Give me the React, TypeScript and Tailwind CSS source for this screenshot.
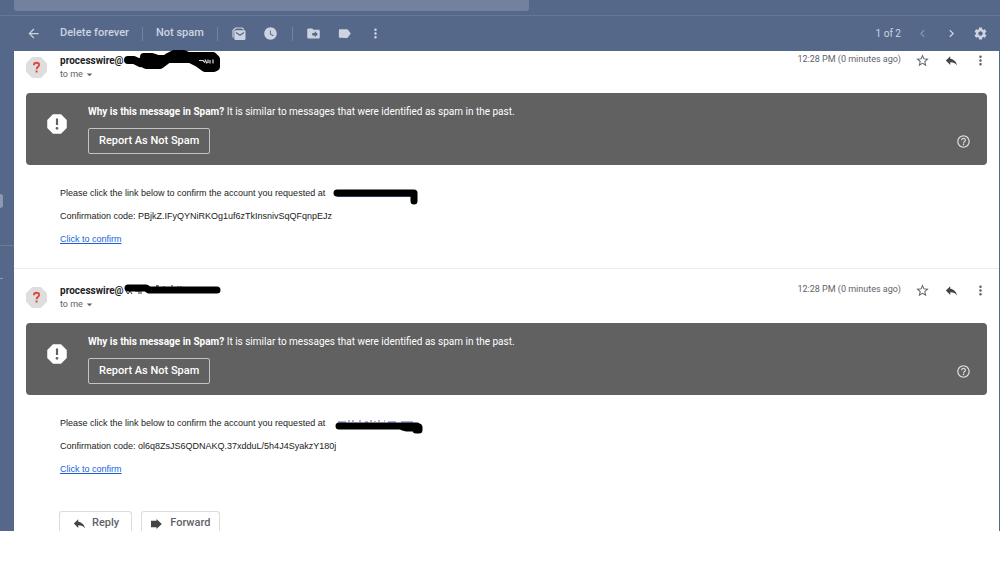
import type { ReactNode } from 'react';
import {
  MdArrowBack,
  MdArrowDropDown,
  MdChevronLeft,
  MdChevronRight,
  MdDriveFileMove,
  MdHelpOutline,
  MdLabel,
  MdMoreVert,
  MdReply,
  MdReport,
  MdSettings,
  MdStarBorder,
  MdWatchLater,
} from 'react-icons/md';

type Message = {
  code: string;
  senderMask: ReactNode;
  linkMask: ReactNode;
};

const messages: Message[] = [
  {
    code: 'PBjkZ.IFyQYNiRKOg1uf6zTkInsnivSqQFqnpEJz',
    senderMask: (
      <svg className="absolute -top-1 left-16" width="98" height="24" viewBox="0 0 98 24" aria-hidden="true">
        <path
          d="M4 10H10L16 13M20 7H28L34 9H40M16 12L22 15H36L44 9M44 7L50 4H60L64 6M44 9H64M64 6H89L92 9V17L90 18H81L74 13L66 9"
          fill="none"
          stroke="#000"
          strokeWidth="8"
          strokeLinecap="round"
          strokeLinejoin="round"
        />
        <path d="M20 7H90V17H82L74 12H40L34 15H22Z" fill="#000" />
        <path d="M75 10.500h4l2 2M81 9.500l2 4M84 9.500v3.500M86 10v3.500M89 9.500v4" fill="none" stroke="#ddd" strokeWidth="1.200" />
      </svg>
    ),
    linkMask: (
      <svg className="absolute -top-0.5 left-full ml-2" width="88" height="22" viewBox="0 0 88 22" aria-hidden="true">
        <path d="M4 11.500H81" stroke="#4a78cf" strokeWidth="1" />
        <path
          d="M4 8H81V16"
          fill="none"
          stroke="#000"
          strokeWidth="7"
          strokeLinecap="round"
          strokeLinejoin="round"
        />
      </svg>
    ),
  },
  {
    code: 'ol6q8ZsJS6QDNAKQ.37xdduL/5h4J4SyakzY180j',
    senderMask: (
      <svg className="absolute -top-1 left-16" width="98" height="24" viewBox="0 0 98 24" aria-hidden="true">
        <path d="M2 11l2 3 2-3 2 3M11 11h4v3M17 11v3M32 6h3M33 5v3M40 6v3M43 7v2M48 5v3M54 6v3M57 6v1" fill="none" stroke="#333" strokeWidth="1" />
        <path
          d="M4 8H22L25 10H93"
          fill="none"
          stroke="#000"
          strokeWidth="7"
          strokeLinecap="round"
          strokeLinejoin="round"
        />
      </svg>
    ),
    linkMask: (
      <svg className="absolute -top-0.5 left-full ml-2" width="94" height="22" viewBox="0 0 94 22" aria-hidden="true">
        <path d="M5 7h8M16 5v2M20 5v2M27 5v2M32 7h3M38 5v2M42 6v1M46 5v2M51 6h1M55 7h8M68 7h12" fill="none" stroke="#4a68b8" strokeWidth="1" />
        <path
          d="M6 11H84M70 12L74 13H82L86 12V15H83"
          fill="none"
          stroke="#000"
          strokeWidth="7"
          strokeLinecap="round"
          strokeLinejoin="round"
        />
      </svg>
    ),
  },
];

function IconButton({ label, className = '', children }: { label: string; className?: string; children: ReactNode }) {
  return (
    <button type="button" aria-label={label} className={`flex size-5 shrink-0 items-center justify-center ${className}`}>
      {children}
    </button>
  );
}

function Separator() {
  return <span className="h-[14px] w-px bg-[#7383a0]" />;
}

function MarkReadIcon() {
  return (
    <svg width="14" height="14" viewBox="0 0 14 14" aria-hidden="true">
      <path d="M1 10.500V3.500L3.500 1H10L12 2.500" fill="none" stroke="currentColor" strokeWidth="1.200" />
      <rect x="2.300" y="3.300" width="11.200" height="9.700" rx="1.200" fill="currentColor" />
      <path d="M4 5.500L8 8.300L12 5.500" fill="none" stroke="#566889" strokeWidth="1.200" />
    </svg>
  );
}

function ForwardIcon() {
  return (
    <svg width="11" height="10" viewBox="0 0 11 10" aria-hidden="true">
      <path d="M0 1.800H5.500V0L10.800 5L5.500 10V8.200H0Z" fill="currentColor" />
    </svg>
  );
}

function UnknownSenderAvatar() {
  return (
    <svg className="shrink-0" width="21" height="21" viewBox="0 0 21 21" aria-hidden="true">
      <path d="M6.200 0H14.800L21 6.200V14.800L14.800 21H6.200L0 14.800V6.200Z" fill="#dedede" />
      <path d="M7.900 8.300C7.900 6.600 9 5.800 10.500 5.800C12 5.800 13.100 6.600 13.100 8C13.100 9.800 10.600 9.900 10.600 12.300" fill="none" stroke="#dc4b40" strokeWidth="1.900" />
      <rect x="9.600" y="13.500" width="2" height="2" fill="#dc4b40" />
    </svg>
  );
}

function Toolbar() {
  return (
    <header className="text-[#cdd4e0]">
      <div className="h-[15px] pl-3.5">
        <div className="h-[11px] w-[52.200%] rounded-b-[3px] bg-[#72819d]" />
      </div>
      <div className="flex h-9 items-center border-t border-[#64769a] pr-[10px] pl-[23px] text-[11px] font-medium">
        <IconButton label="Back">
          <MdArrowBack size={15} />
        </IconButton>
        <div className="ml-[17px] flex items-center gap-[13px]">
          <button type="button">Delete forever</button>
          <Separator />
          <button type="button">Not spam</button>
          <Separator />
        </div>
        <div className="ml-[11px] flex items-center gap-3">
          <IconButton label="Mark as read">
            <MarkReadIcon />
          </IconButton>
          <IconButton label="Snooze">
            <MdWatchLater size={15} />
          </IconButton>
        </div>
        <div className="ml-[11px] flex items-center gap-[11px]">
          <Separator />
          <IconButton label="Move to">
            <MdDriveFileMove size={15} />
          </IconButton>
          <IconButton label="Labels">
            <MdLabel size={15} />
          </IconButton>
          <IconButton label="More">
            <MdMoreVert size={15} />
          </IconButton>
        </div>
        <div className="ml-auto flex items-center gap-[9px]">
          <span className="mr-0.5 text-[10px] font-normal">1 of 2</span>
          <IconButton label="Newer" className="opacity-40">
            <MdChevronLeft size={15} />
          </IconButton>
          <IconButton label="Older">
            <MdChevronRight size={15} />
          </IconButton>
          <IconButton label="Settings">
            <MdSettings size={15} />
          </IconButton>
        </div>
      </div>
    </header>
  );
}

function SpamBanner() {
  return (
    <section className="mx-3 flex h-[72px] rounded bg-[#616161] pr-[14px] pl-[18px] text-white">
      <MdReport size={26} className="mt-[18px] shrink-0" />
      <div className="ml-[18px] pt-3">
        <p className="text-[10px] leading-[14px]">
          <b className="font-bold">Why is this message in Spam?</b> It is similar to messages that were identified as spam in the past.
        </p>
        <button type="button" className="mt-[9px] h-[26px] rounded-[2px] border border-[#c4c4c4] px-[10px] pt-px text-[11px] font-medium">
          Report As Not Spam
        </button>
      </div>
      <IconButton label="Help" className="mt-[38px] ml-auto text-[#dcdcdc]">
        <MdHelpOutline size={15} />
      </IconButton>
    </section>
  );
}

function MessageView({ message }: { message: Message }) {
  return (
    <article>
      <div className="flex h-[42px] items-start pt-[3px] pr-[9px] pl-3">
        <div className="mt-[3px]">
          <UnknownSenderAvatar />
        </div>
        <div className="ml-[13px]">
          <div className="relative text-[10px] leading-[14px] font-bold text-[#222]">
            processwire@
            {message.senderMask}
          </div>
          <button type="button" className="flex items-center text-[9px] leading-[13px] text-[#5f6368]">
            to me
            <MdArrowDropDown size={13} />
          </button>
        </div>
        <div className="-mt-1 ml-auto flex items-center gap-[9px] text-[#5f6368]">
          <time className="mr-0.5 text-[9px]">12:28 PM (0 minutes ago)</time>
          <IconButton label="Star">
            <MdStarBorder size={15} />
          </IconButton>
          <IconButton label="Reply" className="text-[#444]">
            <MdReply size={15} />
          </IconButton>
          <IconButton label="More">
            <MdMoreVert size={15} />
          </IconButton>
        </div>
      </div>
      <SpamBanner />
      <div className="flex flex-col items-start gap-[10px] pt-[22px] pb-[22px] pl-[46px] font-['Liberation_Sans',Arial,sans-serif] text-[9px] leading-[13px] text-[#222]">
        <p className="relative">
          Please click the link below to confirm the account you requested at
          {message.linkMask}
        </p>
        <p>Confirmation code: {message.code}</p>
        <a href="#confirm" className="text-[#1a5fdc] underline">
          Click to confirm
        </a>
      </div>
    </article>
  );
}

function Sidebar() {
  return (
    <aside className="w-[15px] shrink-0 border-r border-[#c3cbe0] pt-[143px]" aria-label="Folders">
      <div className="h-3.5 w-[3px] rounded-r-full bg-[#8c99b1]" />
      <div className="mt-[37px] h-px bg-[#6b7b99]" />
      <div className="mt-8 h-px w-[3px] bg-[#8c99b1]" />
    </aside>
  );
}

export default function App() {
  return (
    <div className="min-h-screen bg-white font-['Roboto',sans-serif]">
      <div className="bg-[#566889]">
        <Toolbar />
        <div className="flex pr-px">
          <Sidebar />
          <main className="-ml-px min-w-0 grow bg-white">
            <MessageView message={messages[0]} />
            <hr className="border-t border-[#ececec]" />
            <div className="pt-3">
              <MessageView message={messages[1]} />
            </div>
            <div className="flex gap-[9px] pt-[13px] pl-[45px] text-[11px] text-[#5f6368]">
              <button type="button" className="flex h-5 items-center gap-[5px] rounded-t-[3px] border border-b-0 border-[#dcdcdc] px-3 pt-1 font-medium">
                <MdReply size={15} className="text-[#444]" />
                Reply
              </button>
              <button type="button" className="flex h-5 items-center gap-2 rounded-t-[3px] border border-b-0 border-[#dcdcdc] px-[9px] pt-1 font-medium">
                <span className="text-[#444]">
                  <ForwardIcon />
                </span>
                Forward
              </button>
            </div>
          </main>
        </div>
      </div>
    </div>
  );
}
